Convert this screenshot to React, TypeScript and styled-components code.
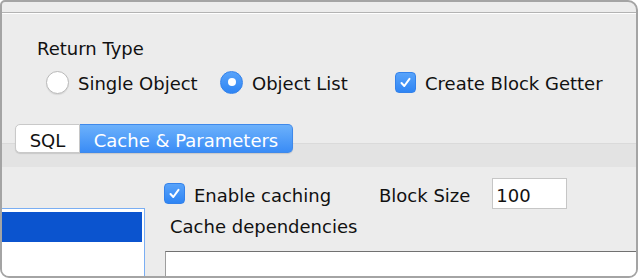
import { createGlobalStyle, styled } from "styled-components";

const GlobalStyle = createGlobalStyle`
  html, body {
    margin: 0;
    padding: 0;
    background: #ffffff;
  }
  body {
    font-family: "DejaVu Sans", "Liberation Sans", sans-serif;
  }
`;

const Window = styled.div`
  box-sizing: border-box;
  width: 638px;
  height: 278px;
  border: 2px solid #a4a4a4;
  border-radius: 5px 10px 9px 9px;
  background: #ececec;
  overflow: hidden;
  display: flex;
  flex-direction: column;
  font-size: 18px;
  line-height: 21px;
  color: #111111;
`;

const TopStrip = styled.div`
  flex: none;
  height: 10px;
  border-bottom: 1px solid #b3b3b3;
`;

const ReturnSection = styled.div`
  flex: none;
  border-top: 1px solid #ffffff;
  padding: 24px 0 0 35px;
`;

const SectionLabel = styled.div`
  height: 21px;
`;

const ChoiceRow = styled.div`
  display: flex;
  align-items: center;
  height: 24px;
  margin: 11px 0 0 9px;
`;

const Choice = styled.label<{ $width?: number }>`
  display: flex;
  align-items: center;
  gap: 9px;
  flex: none;
  width: ${(p) => (p.$width ? `${p.$width}px` : "auto")};
  white-space: nowrap;
`;

const ChoiceText = styled.span`
  padding-top: 2px;
`;

const Radio = styled.span<{ $on?: boolean }>`
  box-sizing: border-box;
  flex: none;
  width: 23px;
  height: 23px;
  border-radius: 50%;
  display: flex;
  align-items: center;
  justify-content: center;
  background: ${(p) => (p.$on ? "linear-gradient(#58a3fa, #2f85f4)" : "#ffffff")};
  border: 1px solid ${(p) => (p.$on ? "#3482ea" : "#b9b9b9")};
  box-shadow: ${(p) => (p.$on ? "none" : "0 1px 1px rgba(0,0,0,0.08)")};

  &::after {
    content: "";
    display: ${(p) => (p.$on ? "block" : "none")};
    width: 8px;
    height: 8px;
    border-radius: 50%;
    background: #ffffff;
  }
`;

const CheckBox = styled.span`
  box-sizing: border-box;
  flex: none;
  width: 21px;
  height: 21px;
  border-radius: 4px;
  background: linear-gradient(#58a3fa, #2f85f4);
  border: 1px solid #3482ea;
  display: flex;
  align-items: center;
  justify-content: center;
`;

const TabSection = styled.div`
  flex: none;
  height: 43px;
  margin-top: 30px;
  padding-left: 13px;
  background: linear-gradient(
    to bottom,
    transparent 0,
    transparent 19px,
    #dadada 19px,
    #dadada 20px,
    #e3e3e3 20px
  );
`;

const Tabs = styled.div`
  display: flex;
  height: 29px;
`;

const Tab = styled.div<{ $active?: boolean; $width: number }>`
  box-sizing: border-box;
  width: ${(p) => p.$width}px;
  height: 29px;
  padding-top: 3px;
  display: flex;
  align-items: center;
  justify-content: center;
  white-space: nowrap;
  color: ${(p) => (p.$active ? "#ffffff" : "#111111")};
  background: ${(p) => (p.$active ? "linear-gradient(#6cb1fb, #3a8cf6)" : "#ffffff")};
  border: 1px solid ${(p) => (p.$active ? "#3f89ea" : "#c9c9c9")};
  border-left-width: ${(p) => (p.$active ? 0 : 1)}px;
  border-radius: ${(p) => (p.$active ? "0 5px 5px 0" : "5px 0 0 5px")};
  box-shadow: 0 1px 1px rgba(0, 0, 0, 0.12);
`;

const Body = styled.div`
  flex: 1;
  display: flex;
  min-height: 0;
`;

const ListPanel = styled.div`
  box-sizing: border-box;
  flex: none;
  width: 143px;
  margin-top: 41px;
  padding: 3px 2px 0 0;
  background: #ffffff;
  border-top: 1px solid #7aaef3;
  border-right: 1px solid #7aaef3;
`;

const ListRow = styled.div<{ $selected?: boolean }>`
  height: 30px;
  background: ${(p) => (p.$selected ? "#0b54cf" : "transparent")};
`;

const RightPane = styled.div`
  flex: 1;
  display: flex;
  flex-direction: column;
  margin-left: 19px;
  padding-top: 11px;
`;

const OptionsRow = styled.div`
  display: flex;
  align-items: center;
  height: 31px;
`;

const FieldLabel = styled.span`
  padding-top: 4px;
  margin-right: 22px;
  white-space: nowrap;
`;

const NumberField = styled.div`
  box-sizing: border-box;
  width: 75px;
  height: 31px;
  padding: 4px 0 0 3px;
  display: flex;
  align-items: center;
  background: #ffffff;
  border: 1px solid #c6c6c6;
`;

const DepsLabel = styled.div`
  height: 21px;
  margin: 7px 0 0 6px;
`;

const DepsArea = styled.div`
  flex: 1;
  margin: 14px 0 0 1px;
  background: #ffffff;
  border-top: 1px solid #717171;
  border-left: 1px solid #9d9d9d;
`;

const Check = () => (
  <svg width="13" height="13" viewBox="0 0 13 13">
    <polyline
      points="2.5,7 5.3,10 10.5,2.8"
      fill="none"
      stroke="#ffffff"
      strokeWidth="2"
      strokeLinecap="round"
      strokeLinejoin="round"
    />
  </svg>
);

export default function App() {
  return (
    <>
      <GlobalStyle />
      <Window>
        <TopStrip />
        <ReturnSection>
          <SectionLabel>Return Type</SectionLabel>
          <ChoiceRow>
            <Choice $width={174}>
              <Radio />
              <ChoiceText>Single Object</ChoiceText>
            </Choice>
            <Choice $width={175}>
              <Radio $on />
              <ChoiceText>Object List</ChoiceText>
            </Choice>
            <Choice>
              <CheckBox>
                <Check />
              </CheckBox>
              <ChoiceText>Create Block Getter</ChoiceText>
            </Choice>
          </ChoiceRow>
        </ReturnSection>
        <TabSection>
          <Tabs>
            <Tab $width={65}>SQL</Tab>
            <Tab $width={213} $active>
              Cache &amp; Parameters
            </Tab>
          </Tabs>
        </TabSection>
        <Body>
          <ListPanel>
            <ListRow $selected />
          </ListPanel>
          <RightPane>
            <OptionsRow>
              <Choice $width={215}>
                <CheckBox>
                  <Check />
                </CheckBox>
                <ChoiceText style={{ paddingTop: 4 }}>Enable caching</ChoiceText>
              </Choice>
              <FieldLabel>Block Size</FieldLabel>
              <NumberField>100</NumberField>
            </OptionsRow>
            <DepsLabel>Cache dependencies</DepsLabel>
            <DepsArea />
          </RightPane>
        </Body>
      </Window>
    </>
  );
}
